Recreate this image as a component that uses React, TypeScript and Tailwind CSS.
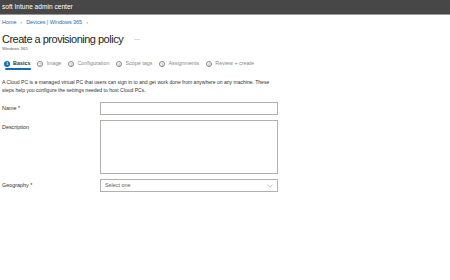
import React from 'react';

const font = { fontFamily: '"Liberation Sans", Arial, sans-serif' };

interface StepProps {
  num: number;
  label: string;
  active?: boolean;
}

const Step: React.FC<StepProps> = ({ num, label, active }) => {
  return (
    <div className="relative flex items-center gap-[3px] h-[13px]">
      {active ? (
        <span className="w-[6px] h-[6px] rounded-full bg-[#0f6cbd] text-white text-[4px] leading-[6px] text-center font-bold">
          {num}
        </span>
      ) : (
        <span className="w-[6px] h-[6px] rounded-full border-[0.6px] border-[#8a8886] text-[#8a8886] text-[4px] leading-[5px] text-center">
          {num}
        </span>
      )}
      <span className={active ? 'text-[5.4px] font-semibold text-[#323130]' : 'text-[5.4px] text-[#8a8886]'}>
        {label}
      </span>
      {active && <span className="absolute left-[1px] right-[-1px] bottom-0 h-[2px] bg-[#0f6cbd] rounded-full" />}
    </div>
  );
};

const App: React.FC = () => {
  const steps = ['Basics', 'Image', 'Configuration', 'Scope tags', 'Assignments', 'Review + create'];

  return (
    <div className="w-[450px] h-[280px] bg-white overflow-hidden" style={font}>
      <div className="h-[15px] bg-[#474747] border-b border-[#9b9b9b] flex items-center px-[2px]">
        <span className="text-white text-[6.6px]">soft Intune admin center</span>
      </div>

      <div className="px-[2px]">
        <div className="mt-[3px] h-[8px] flex items-center gap-[4px] text-[5.4px] text-[#0f6cbd]">
          <span>Home</span>
          <span className="text-[#8a8886]">›</span>
          <span>Devices | Windows 365</span>
          <span className="text-[#8a8886]">›</span>
        </div>

        <div className="mt-[6px] h-[14px] flex items-center gap-[11px]">
          <h1 className="text-[11px] tracking-[-0.5px] text-[#201f1e]">Create a provisioning policy</h1>
          <span className="text-[7px] text-[#8a8886] leading-none -mt-[3px]">...</span>
        </div>
        <div className="h-[6px] text-[4.3px] leading-[6px] text-[#605e5c]">Windows 365</div>

        <div className="mt-[5px] flex items-center gap-[7px] pl-[2px]">
          {steps.map((s, i) => (
            <Step key={s} num={i + 1} label={s} active={i === 0} />
          ))}
        </div>

        <p className="mt-[8px] text-[5.05px] leading-[8px] text-[#323130] w-[280px]">
          A Cloud PC is a managed virtual PC that users can sign in to and get work done from anywhere on any machine. These
          steps help you configure the settings needed to host Cloud PCs.
        </p>

        <div className="mt-[8px] flex flex-col gap-[5px] text-[5.4px] text-[#323130]">
          <div className="flex items-center">
            <label className="w-[98px]">Name *</label>
            <div className="w-[178px] h-[13px] border border-[#b3b0ad]" />
          </div>
          <div className="flex items-start">
            <label className="w-[98px] pt-[3px]">Description</label>
            <div className="w-[178px] h-[54px] border border-[#b3b0ad]" />
          </div>
          <div className="flex items-center">
            <label className="w-[98px]">Geography *</label>
            <div className="w-[178px] h-[13px] border border-[#b3b0ad] flex items-center justify-between px-[4px]">
              <span className="text-[#605e5c] text-[5.4px]">Select one</span>
              <svg width="6" height="4" viewBox="0 0 6 4" fill="none">
                <path d="M0.5 0.8 L3 3.2 L5.5 0.8" stroke="#8a8886" strokeWidth="0.6" />
              </svg>
            </div>
          </div>
        </div>
      </div>
    </div>
  );
};

export default App;
